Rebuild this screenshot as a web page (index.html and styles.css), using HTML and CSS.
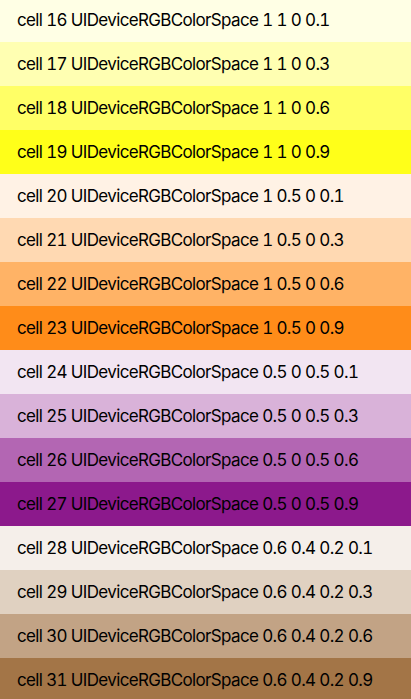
FILE: index.html
```html
<!DOCTYPE html>
<html>
<head>
<meta charset="utf-8">
<link rel="stylesheet" href="styles.css">
</head>
<body>
<ul class="list">
<li class="cell" style="background: rgba(255,255,0,0.1)">cell 16 UIDeviceRGBColorSpace 1 1 0 0.1</li>
<li class="cell" style="background: rgba(255,255,0,0.3)">cell 17 UIDeviceRGBColorSpace 1 1 0 0.3</li>
<li class="cell" style="background: rgba(255,255,0,0.6)">cell 18 UIDeviceRGBColorSpace 1 1 0 0.6</li>
<li class="cell" style="background: rgba(255,255,0,0.9)">cell 19 UIDeviceRGBColorSpace 1 1 0 0.9</li>
<li class="cell" style="background: rgba(255,127.5,0,0.1)">cell 20 UIDeviceRGBColorSpace 1 0.5 0 0.1</li>
<li class="cell" style="background: rgba(255,127.5,0,0.3)">cell 21 UIDeviceRGBColorSpace 1 0.5 0 0.3</li>
<li class="cell" style="background: rgba(255,127.5,0,0.6)">cell 22 UIDeviceRGBColorSpace 1 0.5 0 0.6</li>
<li class="cell" style="background: rgba(255,127.5,0,0.9)">cell 23 UIDeviceRGBColorSpace 1 0.5 0 0.9</li>
<li class="cell" style="background: rgba(127.5,0,127.5,0.1)">cell 24 UIDeviceRGBColorSpace 0.5 0 0.5 0.1</li>
<li class="cell" style="background: rgba(127.5,0,127.5,0.3)">cell 25 UIDeviceRGBColorSpace 0.5 0 0.5 0.3</li>
<li class="cell" style="background: rgba(127.5,0,127.5,0.6)">cell 26 UIDeviceRGBColorSpace 0.5 0 0.5 0.6</li>
<li class="cell" style="background: rgba(127.5,0,127.5,0.9)">cell 27 UIDeviceRGBColorSpace 0.5 0 0.5 0.9</li>
<li class="cell" style="background: rgba(153,102,51,0.1)">cell 28 UIDeviceRGBColorSpace 0.6 0.4 0.2 0.1</li>
<li class="cell" style="background: rgba(153,102,51,0.3)">cell 29 UIDeviceRGBColorSpace 0.6 0.4 0.2 0.3</li>
<li class="cell" style="background: rgba(153,102,51,0.6)">cell 30 UIDeviceRGBColorSpace 0.6 0.4 0.2 0.6</li>
<li class="cell" style="background: rgba(153,102,51,0.9)">cell 31 UIDeviceRGBColorSpace 0.6 0.4 0.2 0.9</li>
</ul>
</body>
</html>
```

FILE: styles.css
```css
html, body {
  margin: 0;
  padding: 0;
  background: #ffffff;
  overflow: hidden;
}
.list {
  list-style: none;
  margin: -2.33px 0 0 0;
  padding: 0;
  display: flex;
  flex-direction: column;
}
.cell {
  height: 44px;
  display: flex;
  align-items: center;
  padding-left: 17px;
  font-family: Inter, "Liberation Sans", sans-serif;
  font-size: 17px;
  letter-spacing: -0.65px;
  font-variant-numeric: tabular-nums;
  color: #000000;
  white-space: nowrap;
}
```
